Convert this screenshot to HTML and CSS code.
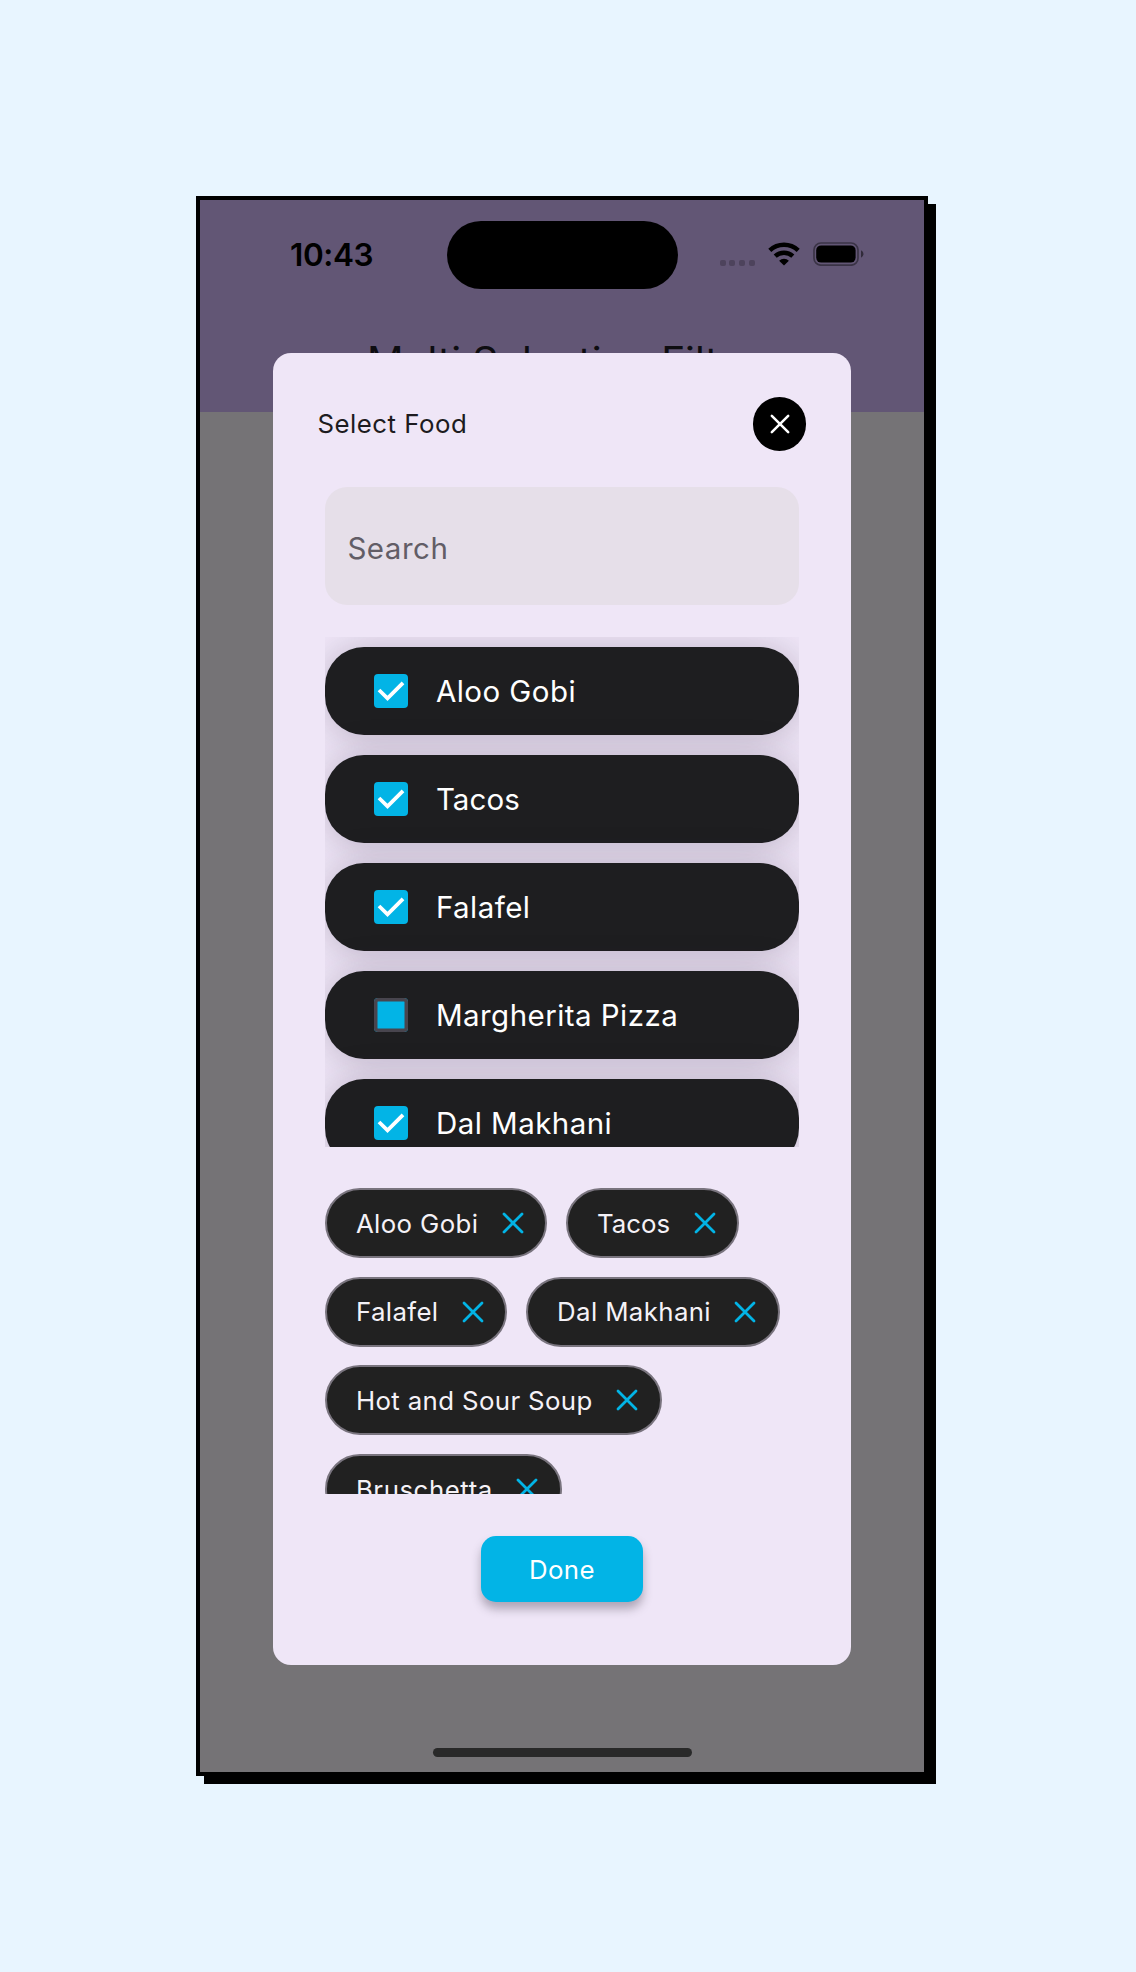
FILE: index.html
```html
<!DOCTYPE html>
<html lang="en">
<head>
<meta charset="utf-8">
<title>Multi Selection Filter</title>
<link rel="stylesheet" href="styles.css">
</head>
<body>
<svg class="defs" aria-hidden="true">
  <symbol id="cross" viewBox="0 0 22 22"><path d="M2 2L20 20M20 2L2 20" fill="none" stroke="currentColor" stroke-width="2.8" stroke-linecap="round"/></symbol>
  <symbol id="tick" viewBox="0 0 34 34"><path d="M5 16L13.5 24.3L29 8.8" fill="none" stroke="#fff" stroke-width="3.8"/></symbol>
</svg>
<main class="phone">
  <header class="app-bar">
    <div class="status">
      <span class="time">10:43</span>
      <span class="island"></span>
      <span class="signal"><i></i><i></i><i></i><i></i></span>
      <svg class="wifi" width="32" height="24" viewBox="0 0 32 24">
        <path d="M1.8 8.4A20.5 20.5 0 0 1 30.2 8.4" fill="none" stroke="#000" stroke-width="4.4"/>
        <path d="M7.2 14.2A12.8 12.8 0 0 1 24.8 14.2" fill="none" stroke="#000" stroke-width="4.4"/>
        <path d="M16 23.6L11.1 18.7A7.2 7.2 0 0 1 20.9 18.7Z"/>
      </svg>
      <svg class="battery" width="51" height="24" viewBox="0 0 51 24">
        <rect x="1" y="1" width="44" height="22.2" rx="7" fill="none" stroke="#000" stroke-opacity=".4" stroke-width="1.7"/>
        <rect x="3.2" y="3.4" width="39.4" height="17.2" rx="5"/>
        <path d="M48 8.2Q50.5 9.5 50.5 12T48 15.8Z" fill-opacity=".5"/>
      </svg>
    </div>
    <h1 class="title">Multi Selection Filter</h1>
  </header>
  <div class="home-bar"></div>

  <section class="dialog">
    <div class="dialog-head">
      <h2>Select Food</h2>
      <button class="close"><svg width="20" height="20"><use href="#cross"/></svg></button>
    </div>
    <div class="search">Search</div>
    <div class="list">
      <div class="item"><span class="box"><svg width="34" height="34"><use href="#tick"/></svg></span><span>Aloo Gobi</span></div>
      <div class="item"><span class="box"><svg width="34" height="34"><use href="#tick"/></svg></span><span class="tight">Tacos</span></div>
      <div class="item"><span class="box"><svg width="34" height="34"><use href="#tick"/></svg></span><span>Falafel</span></div>
      <div class="item"><span class="box box-off"></span><span>Margherita Pizza</span></div>
      <div class="item"><span class="box"><svg width="34" height="34"><use href="#tick"/></svg></span><span>Dal Makhani</span></div>
    </div>
    <div class="chips">
      <div class="chip">Aloo Gobi<svg width="22" height="22"><use href="#cross"/></svg></div>
      <div class="chip tight">Tacos<svg width="22" height="22"><use href="#cross"/></svg></div>
      <div class="chip">Falafel<svg width="22" height="22"><use href="#cross"/></svg></div>
      <div class="chip">Dal Makhani<svg width="22" height="22"><use href="#cross"/></svg></div>
      <div class="chip">Hot and Sour Soup<svg width="22" height="22"><use href="#cross"/></svg></div>
      <div class="chip loose">Bruschetta<svg width="22" height="22"><use href="#cross"/></svg></div>
    </div>
    <button class="done">Done</button>
  </section>
</main>
</body>
</html>
```
FILE: styles.css
```css
* { box-sizing: border-box; }
body {
  margin: 0;
  padding: 196px 0 0 196px;
  height: 1972px;
  background: #e8f5ff;
  font-family: Inter, "Liberation Sans", sans-serif;
  overflow: hidden;
}
.defs { position: absolute; width: 0; height: 0; }
h1, h2 { margin: 0; font-weight: 400; }
button { border: 0; padding: 0; font: inherit; }
svg { display: block; flex: none; }

.phone {
  position: relative;
  width: 732px;
  height: 1580px;
  border: 4px solid #000;
  background: #757376;
  box-shadow: 8px 8px 0 #000;
  display: flex;
  flex-direction: column;
  justify-content: space-between;
  align-items: center;
}
.app-bar { width: 724px; height: 212px; background: #625675; overflow: hidden; }
.status {
  display: flex;
  align-items: center;
  height: 68px;
  margin-top: 20.6px;
  padding-left: 90px;
}
.time {
  width: 156.5px;
  font-size: 31.5px;
  font-weight: 600;
  line-height: 40px;
  letter-spacing: -0.4px;
}
.island { width: 231px; height: 68px; border-radius: 34px; background: #000; }
.signal { display: flex; gap: 3.8px; margin: 16px 0 0 42px; }
.signal i { width: 6px; height: 6px; border-radius: 2px; background: #4d435c; }
.wifi { margin-left: 13px; margin-top: -1px; }
.battery { margin-left: 13.5px; margin-top: -2px; }
.title {
  margin-top: 48px;
  font-size: 40.5px;
  line-height: 50px;
  text-align: center;
  color: #0e0d11;
  white-space: nowrap;
}
.home-bar { width: 259px; height: 9px; margin-bottom: 15px; border-radius: 5px; background: #292929; }

.dialog {
  position: absolute;
  left: 73.2px;
  top: 153.3px;
  width: 577.5px;
  height: 1311.7px;
  border-radius: 18px;
  background: #efe6f7;
  padding: 44px 51.5px 0;
  display: flex;
  flex-direction: column;
  align-items: center;
}
.dialog-head {
  width: 489px;
  height: 53.5px;
  display: flex;
  justify-content: space-between;
  align-items: center;
}
.dialog-head h2 { font-size: 25.8px; letter-spacing: 0.5px; color: #1d1b20; padding-bottom: 1.5px; }
.close {
  width: 53.5px;
  height: 53.5px;
  border-radius: 50%;
  background: #000;
  color: #fff;
  display: grid;
  place-items: center;
}
.search {
  flex: none;
  width: 474px;
  height: 118px;
  margin-top: 36.7px;
  padding-left: 22.5px;
  border-radius: 22px;
  background: #e6dfe9;
  color: #625d66;
  font-size: 29.5px;
  line-height: 122px;
  letter-spacing: 0.5px;
}
.list {
  flex: none;
  width: 474px;
  height: 510.4px;
  margin-top: 31.5px;
  padding-top: 9.7px;
  display: flex;
  flex-direction: column;
  gap: 19.7px;
  overflow: hidden;
}
.item {
  flex: none;
  height: 88.3px;
  border-radius: 39px;
  background: #1e1e20;
  box-shadow: 0 2px 36px rgba(50, 35, 65, .26);
  padding: 0 0 0 49.5px;
  display: flex;
  align-items: center;
  gap: 28px;
  color: #fff;
  font-size: 29.5px;
  letter-spacing: 0.45px;
}
.box { width: 33.5px; height: 33.5px; border-radius: 4px; background: #02b4e6; }
.box-off { box-shadow: inset 0 0 0 3.5px #48454e; }
.chips {
  flex: none;
  width: 474px;
  height: 305.6px;
  margin-top: 40.7px;
  display: flex;
  flex-wrap: wrap;
  align-content: flex-start;
  gap: 18.7px;
  overflow: hidden;
}
.chip {
  height: 70px;
  border: 2px solid #79747e;
  border-radius: 35px;
  background: #212121;
  padding: 0 21.7px 0 29px;
  display: flex;
  align-items: center;
  gap: 23.3px;
  color: #f5f2f7;
  font-size: 25.8px;
  letter-spacing: 0.37px;
  white-space: nowrap;
}
.chip svg { color: #02b4e6; }
.tight { letter-spacing: 0.05px; }
.loose { letter-spacing: 0.55px; }
.done {
  flex: none;
  width: 162px;
  height: 66px;
  margin-top: 42.5px;
  border-radius: 15px;
  background: #02b4e6;
  color: #fff;
  font-size: 25.8px;
  letter-spacing: 0.4px;
  box-shadow: 0 7px 10px rgba(50, 40, 60, .34);
}
```
